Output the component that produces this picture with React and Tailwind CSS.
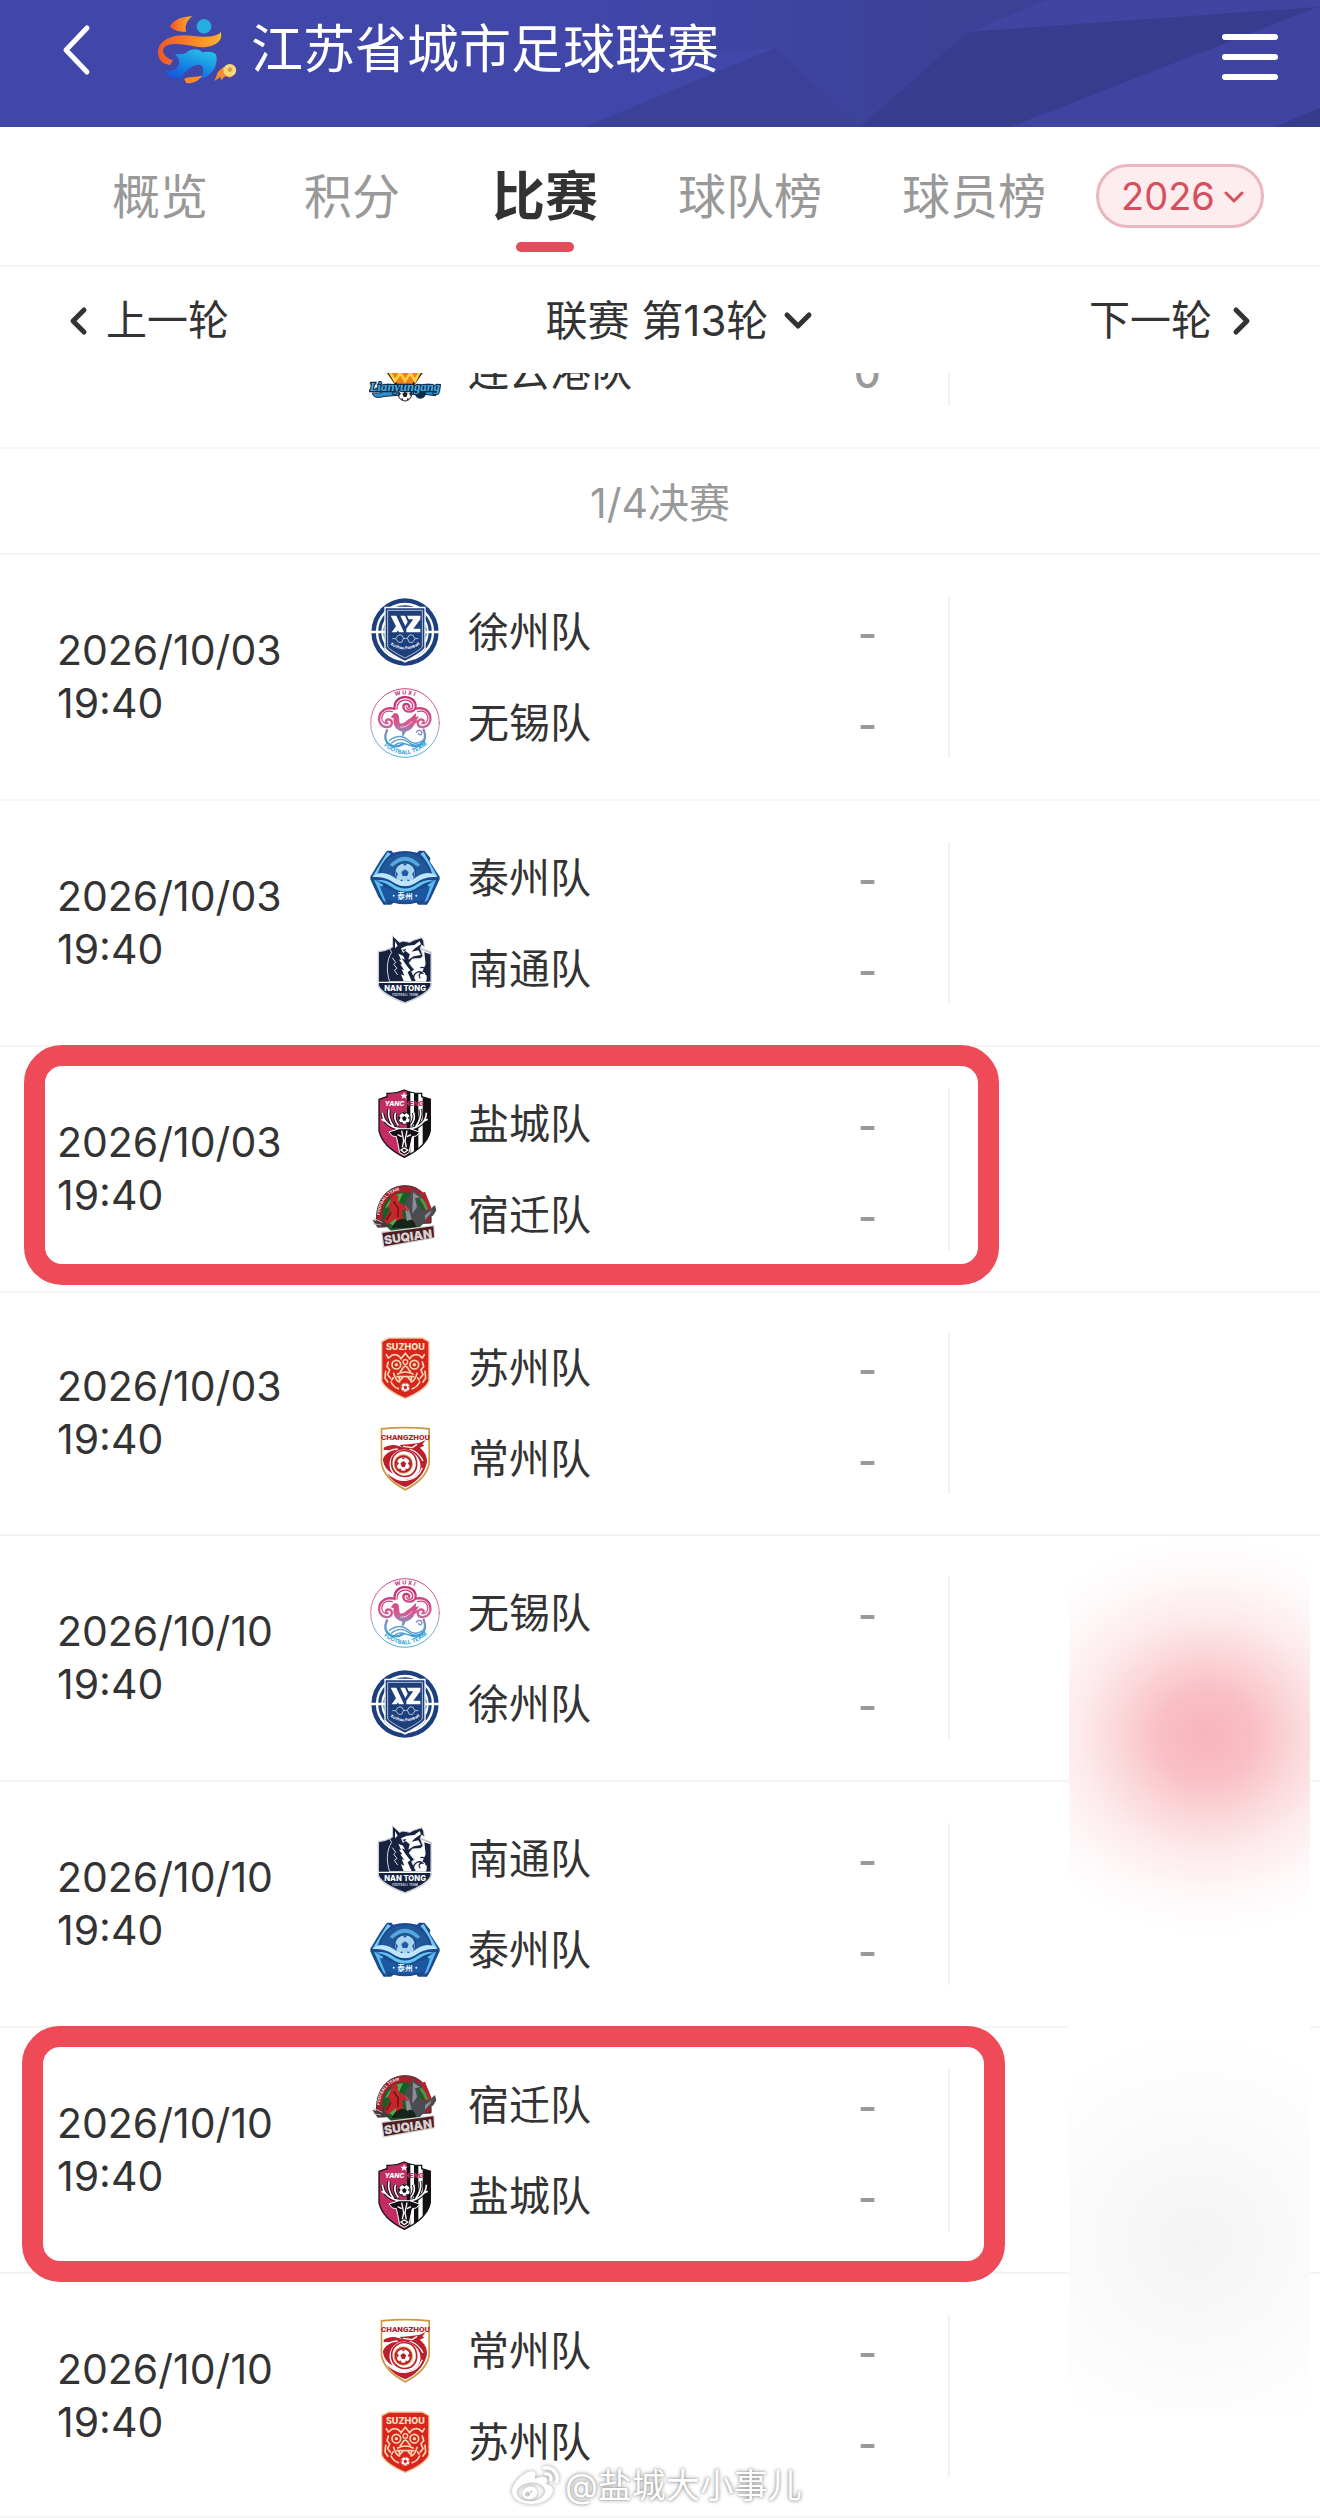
import React from 'react';
import { FaWeibo } from 'react-icons/fa';

const tabs = [
    { label: '概览', space: 'mr-24' },
    { label: '积分', space: 'mr-[92px]' },
    { label: '比赛', space: 'mr-20', active: true },
    { label: '球队榜', space: 'mr-20' },
    { label: '球员榜', space: 'mr-auto' },
];

const matches = [
    { date: '2026/10/03', time: '19:40', home: '徐州队', away: '无锡队' },
    { date: '2026/10/03', time: '19:40', home: '泰州队', away: '南通队' },
    { date: '2026/10/03', time: '19:40', home: '盐城队', away: '宿迁队', mark: 'left-6 right-[321px] -top-0.5 h-[240px]' },
    { date: '2026/10/03', time: '19:40', home: '苏州队', away: '常州队', pad: 'pt-[29px] pb-[30px]' },
    { date: '2026/10/10', time: '19:40', home: '无锡队', away: '徐州队' },
    { date: '2026/10/10', time: '19:40', home: '南通队', away: '泰州队' },
    { date: '2026/10/10', time: '19:40', home: '宿迁队', away: '盐城队', mark: 'left-[22px] right-[315px] -top-0.5 h-[256px]' },
    { date: '2026/10/10', time: '19:40', home: '常州队', away: '苏州队', pad: 'pt-[31px] pb-[29px] border-b-2' },
];

function Ball({ x, y, r, dark }) {
    return (
        <g transform={`translate(${x} ${y}) scale(${r / 10})`}>
            <circle r="10" fill="#fff" stroke={dark} strokeWidth="1.5" />
            <path d="M0-4 4-1 2 4H-2L-4-1Z" fill={dark} />
            <path d="M-3-9H3L0-6ZM9-4V3L6-1ZM-9-4V3L-6-1ZM7 7 3 9 3 6ZM-7 7-3 9-3 6Z" fill={dark} />
        </g>
    );
}

function Xuzhou() {
    return (
        <g>
            <circle r="101" fill="#1d3f7b" />
            <circle r="84" fill="none" stroke="#fff" strokeWidth="7" />
            <circle r="68" fill="none" stroke="#fff" strokeWidth="6" />
            <path d="M-102 0H102" stroke="#fff" strokeWidth="8" />
            <path d="M-62-76H62V50Q50 68 0 92Q-50 68-62 50Z" fill="#fff" />
            <path d="M-58-71H58V48Q46 63 0 86Q-46 63-58 48Z" fill="#1d3f7b" />
            <path d="M-52-65H52V45Q40 58 0 78Q-40 58-52 45Z" fill="none" stroke="#fff" strokeWidth="2" />
            <path d="M-43-49H-26L-3 1H-18ZM-40 1-27-17-20-5-26 1ZM-14-49H0L8-31 1-17ZM6-49H46V-38L25-10H46V1H4V-10L25-38H11Z" fill="#fff" />
            <path d="M-28 20-20 9H-10L-4 19-10 31H-20ZM-4 19H7L13 9H23L30 20 23 31H13L7 19M-28 20H-38M30 20H40" fill="none" stroke="#fff" strokeWidth="2" />
            <path id="xz-arc" d="M-48 35Q0 69 48 35" fill="none" />
            <text fill="#fff" fontSize="12" fontWeight="700" textAnchor="middle">
                <textPath href="#xz-arc" startOffset="50%">Xuzhou Football</textPath>
            </text>
        </g>
    );
}

function Wuxi() {
    return (
        <g>
            <defs>
                <linearGradient id="wx" x1="0" y1="-104" x2="0" y2="104" gradientUnits="userSpaceOnUse">
                    <stop offset="0" stopColor="#bb1f6b" />
                    <stop offset="0.5" stopColor="#d9588f" />
                    <stop offset="0.68" stopColor="#6a9dcb" />
                    <stop offset="1" stopColor="#1b9fd8" />
                </linearGradient>
            </defs>
            <g fill="none" stroke="url(#wx)" strokeLinecap="round">
                <circle r="103" fill="#fff" strokeWidth="2.5" />
                <g strokeWidth="7">
                    <path d="M-31-42C-37-88 32-88 32-50C32-28-5-30-5-48C-5-60 14-60 13-48" />
                    <path d="M-33-43C-82-54-92 7-57 12C-36 14-34-10-50-11C-59-11-59 0-52 1" />
                    <path d="M33-43C82-54 90 8 55 12C34 14 34-10 48-11C58-11 58 0 52 1" />
                    <path d="M-54 22C-72 62-34 80-6 63" />
                    <path d="M56 20C72 60 36 78 20 67" />
                </g>
                <g strokeWidth="4">
                    <path d="M-24-42C-26-76 23-76 23-51C23-38 6-38 5-48" />
                    <path d="M-38-34C-71-43-79-5-58 2" />
                    <path d="M38-34C70-43 77-5 58 2" />
                    <path d="M34 28C38 18 54 22 50 32C48 38 40 36 41 31" />
                    <path d="M-46 52C-20 32 0 42 12 53S42 62 60 47" />
                    <path d="M-40 60C-18 42 0 50 12 59S40 68 54 58M-30 66C-10 52 4 66 20 68" />
                </g>
            </g>
            <path d="M-43-17-34-28C-24-32-18-26-18-16L-16 0C-6 6 2-6 16-14C22-18 24-24 34-30L32-18 42-20 34-8 42-6 28 4C24 16 12 24 2 26L-4 38H-10L-8 26C-26 22-38 8-34-14Z" fill="url(#wx)" />
            <path d="M-14 12Q4 16 22-6" fill="none" stroke="#fff" strokeWidth="2" />
            <path id="wx-top" d="M-60-64Q0-108 60-64" fill="none" />
            <path id="wx-bottom" d="M-82 50Q0 140 84 46" fill="none" />
            <g fontSize="17" fontWeight="700" textAnchor="middle">
                <text fill="#b92c70">
                    <textPath href="#wx-top" startOffset="50%">W U X I</textPath>
                </text>
                <text fill="#2ca3d8">
                    <textPath href="#wx-bottom" startOffset="50%">FOOTBALL TEAM</textPath>
                </text>
            </g>
        </g>
    );
}

function Taizhou() {
    return (
        <g>
            <path d="M-54-82H-40L-36-76Q0-86 36-76L42-82H58L76-60 74-50 104-4V4L78 60 66 80H40L34 74Q0 84-34 74L-42 80H-64L-80 56-104 4V-4L-74-54Z" fill="#1c4a8e" />
            <path d="M-52-78-98-4-82-8C-78-34-60-58-42-72ZM56-78 98-4 82-8C78-34 60-58 46-72Z" fill="#6fcbf5" />
            <path d="M-94 4-66 66-56 74-70 36-66 20ZM94 4 68 66 58 74 72 36 68 20Z" fill="#59b9ec" />
            <path d="M-74-10C-70-38-50-62-30-70Q0-78 30-70C50-62 70-38 74-10L0 20Z" fill="#225799" />
            <path d="M-46-40Q0-88 46-40L37-34Q0-70-37-34Z" fill="#55a8dc" />
            <circle cy="-14" r="33" fill="#1c4a8e" />
            <circle cy="-14" r="30" fill="#a9d3ef" />
            <path d="M0-26 11-18 7-6H-7L-11-18ZM-8-44H8L0-36ZM-29-22-21-12-27 0ZM29-22 21-12 27 0ZM-18 10-8 4-6 15ZM18 10 8 4 6 15Z" fill="#1f5ca5" />
            <path d="M-98-2C-76-24-50-14-26 2Q0 18 26 2C50-14 76-24 98-2C68-6 46 6 28 17Q0 32-28 17C-46 6-68-6-98-2Z" fill="#bde6fb" />
            <path d="M-90 9C-60 0-44 14-26 25Q0 38 26 25C44 14 60 0 90 9C60 10 44 26 26 35Q0 46-26 35C-44 26-60 10-90 9Z" fill="#64c3f1" />
            <path d="M-94 4C-60 0-44 12-27 21Q0 34 27 21C44 12 60 0 94 4" fill="none" stroke="#1c4a8e" strokeWidth="3" />
            <path d="M-76 24Q-50 30-28 40Q0 50 28 40Q50 30 76 24L60 64Q0 82-60 64Z" fill="#1c57a1" />
            <text y="63" fill="#e6f6ff" fontSize="23" fontWeight="700" textAnchor="middle">泰州</text>
            <circle cx="-34" cy="53" r="3" fill="#e6f6ff" />
            <circle cx="34" cy="53" r="3" fill="#e6f6ff" />
        </g>
    );
}

function Nantong() {
    return (
        <g>
            <path d="M-82-54Q-58-56-42-66H40L80-52V50Q74 76 0 104Q-74 76-82 50Z" fill="#c9cdd8" />
            <path d="M-78-50Q-58-52-40-62H40L76-48V48Q70 72 0 99Q-70 72-78 48Z" fill="#17223f" />
            <path d="M-70-42Q-54-44-42-52L-50-10-34 36H-40L-50 30-70 34Z" fill="#17223f" />
            <path d="M40-62 76-48V38H14L0-20Z" fill="#fff" />
            <path d="M58-50 76-44V38H62C70 26 64 10 52 8L62-14Z" fill="#17223f" />
            <path
                d="M-46 38C-56 8-56-26-40-50L-46-60-37-66-38-100-16-80-6-84 14-80 26-86 50-94 56-84 58-66 50-72 46-62 54-40 48-32 22-30 12-18 28 2 20 8 34 38Z"
                fill="#17223f"
                stroke="#d3d6df"
                strokeWidth="3"
            />
            <path d="M-30-84-22-70-30-62ZM-12-62 6-70 28-72 44-84 48-74 30-62 20-52 40-56 48-42 26-38 10-28 14-44 2-54-6-48Z" fill="#fff" />
            <path d="M-8-58 4-60-2-52Z" fill="#17223f" />
            <path d="M-20-46-6-40 0-28-10-32 2-14 16 4 8 10 20 36H-4L-12 16-2 20-10 0-2 4-14-14-8-14-18-28-12-28Z" fill="#fff" />
            <path d="M-38-34-28-20-34-14-24-2-32 4-22 18" fill="none" stroke="#fff" strokeWidth="2.5" />
            <path d="M26 34C22 16 38 2 52 12C44 12 38 20 46 28M46-4C60-8 70 6 62 18" fill="none" stroke="#17223f" strokeWidth="4" />
            <path d="M-80 40H78" stroke="#fff" strokeWidth="4" />
            <path d="M-77 42H75V48Q70 72 0 98Q-70 72-77 48Z" fill="#17223f" />
            <text y="66" fill="#fff" fontSize="23" fontWeight="800" textAnchor="middle">NAN TONG</text>
            <text y="80" fill="#cfd5e2" fontSize="9" fontWeight="700" textAnchor="middle">FOOTBALL TEAM</text>
        </g>
    );
}

function Yancheng() {
    return (
        <g>
            <defs>
                <clipPath id="yc">
                    <path d="M-78-74-54-82V-92Q-28-90-2-102Q26-90 50-92V-82L76-74V20Q66 68-2 100Q-68 68-78 20Z" />
                </clipPath>
            </defs>
            <g clipPath="url(#yc)">
                <path d="M-80-104H6V104H-80Z" fill="#c22c62" />
                <path d="M6-104H80V104H6Z" fill="#111" />
                <path d="M16-104H27V104H16ZM40-104H53V104H40Z" fill="#fff" />
            </g>
            <path d="M-78-74-54-82V-92Q-28-90-2-102Q26-90 50-92V-82L76-74V20Q66 68-2 100Q-68 68-78 20Z" fill="none" stroke="#1b1118" strokeWidth="4" />
            <path d="M-3-96 0-88H8L2-83 4-75-3-80-10-75-8-83-14-88H-6Z" fill="#fff" />
            <text y="-53" x="-61" fill="#fff" fontSize="20" fontStyle="italic" fontWeight="800">YANC</text>
            <text y="-53" x="-2" fill="#c22c62" fontSize="20" fontStyle="italic" fontWeight="800">HENG</text>
            <g fill="none" strokeLinejoin="round">
                <g stroke="#161016" strokeWidth="11">
                    <path d="M-16 14C-40 12-66-4-68-34M-34 8C-46-8-52-24-48-44M-20 4C-32-10-32-24-28-34" />
                    <path d="M14 14C38 12 64-4 64-34M32 8C44-8 50-24 46-44M18 4C28-10 30-24 26-34" />
                </g>
                <g stroke="#fff" strokeWidth="5">
                    <path d="M-16 14C-40 12-66-4-68-34M-34 8C-46-8-52-24-48-44M-20 4C-32-10-32-24-28-34M-60-8-70-14" />
                    <path d="M14 14C38 12 64-4 64-34M32 8C44-8 50-24 46-44M18 4C28-10 30-24 26-34M56-8 68-14" />
                </g>
            </g>
            <Ball x={-2} y={-17} r={18} dark="#161016" />
            <path d="M-18 14H14L44 24 34 36 22 38 18 56 12 86-2 94-16 86-22 56-26 38-38 36-48 24Z" fill="#161016" stroke="#fff" strokeWidth="3" />
            <path d="M-10 20-4 50-8 70M6 20 0 50 4 70M-22 32-10 38M18 32 6 38M-12 78-2 72 8 78-2 86Z" fill="none" stroke="#fff" strokeWidth="4" />
        </g>
    );
}

function Suqian() {
    return (
        <g>
            <path d="M-84 30C-94-40-54-88 0-88C48-88 82-50 78 24Z" fill="#a3202c" stroke="#3d2a2a" strokeWidth="3" />
            <circle cx="-4" cy="-4" r="64" fill="#1b5f28" />
            <path d="M-60-20Q-40-64-6-66L-18-40ZM-52 20-20 0-30 36Z" fill="#57a852" />
            <path id="sq-arc" d="M-76 0C-72-50-40-76 4-77" fill="none" />
            <text fill="#f6e3e3" fontSize="12" fontWeight="700">
                <textPath href="#sq-arc">FOOTBALL TEAM</textPath>
            </text>
            <path d="M36-62 60-70 72-40 80-20 62-14Z" fill="#b9232f" />
            <path d="M42-58 58-34 66-16" stroke="#3aa04a" strokeWidth="8" fill="none" />
            <path d="M20-82 36-66 52-60 50-50 34-48 44-24 60-10 72-14 90-30 94-14 84 2 70 6 60 24 44 34H-4L8 2-4-20 6-50 20-62Z" fill="#4a4c52" />
            <path d="M24-68 38-58 46-54 30-50 36-24 22-4ZM0-30 12-16 22 20 6 30ZM60 0 80-14 76-4 60 14Z" fill="#8b8e95" />
            <path d="M-40-56-28-64-20-54-22-42 0-28 12-12-8-16-6 10-22 34-28 10-42 22-68 38-60 12-44-14-52-24-44-40Z" fill="#c4262e" />
            <path d="M-34-40-20-20-22 6M-42-8-56 16" fill="none" stroke="#65110f" strokeWidth="4" />
            <path d="M-98 14-76 20-58 0-62 18-44 36-82 38Z" fill="#4a3b3a" />
            <path d="M-94 10-68 22M-96 26-72 30" stroke="#b7b0b0" strokeWidth="3" />
            <path d="M-40 40C-28 8-2 8 8 18C20 8 30 20 34 38Z" fill="#16241a" />
            <path d="M-72 50 88 30 90 70-66 98Z" fill="#d9d2d2" />
            <path d="M-68 54 85 34 87 67-62 94Z" fill="#4c1e22" />
            <text transform="rotate(-8)" x="0" y="79" fill="#d8d3d3" fontSize="36" fontWeight="900" textAnchor="middle">SUQIAN</text>
        </g>
    );
}

function Suzhou() {
    return (
        <g>
            <path d="M-72-80-50-92H54L74-80V40Q64 68 1 94Q-62 68-72 40Z" fill="#f3cfa6" />
            <path d="M-68-78-48-88H52L70-78V38Q60 64 1 89Q-58 64-68 38Z" fill="#d8261c" />
            <text x="1" y="-54" fill="#fbe3c4" fontSize="27" fontWeight="800" textAnchor="middle">SUZHOU</text>
            <g fill="none" stroke="#f9d9b4" strokeWidth="5" strokeLinecap="round">
                <circle cx="-26" cy="-10" r="13" />
                <circle cx="28" cy="-10" r="13" />
                <circle cx="1" cy="-18" r="7" strokeWidth="4" />
                <path d="M-46-32C-36-46-18-40-12-28L1-44 14-28C20-40 38-46 50-32" />
                <path d="M-50-18-54-4-46 6-52 20-44 30M52-18 56-4 48 6 54 20 46 30" />
                <path d="M-14 10C-6 4-8-4 1-6C10-4 8 4 16 10M-22 18Q1 6 24 18" />
                <path d="M-34 16C-30 34-20 42-16 42M36 16C32 34 22 42 18 42" />
                <path d="M-24 26H26M-18 26-16 38-8 30M20 26 18 38 10 30" />
                <path d="M-42 42Q-34 58-20 62M44 42Q36 58 22 62" />
                <path d="M-56-40-50-30M58-40 52-30M-58 10-60 30-52 42M60 10 62 30 54 42M-36 30-40 36M38 30 42 36" />
            </g>
            <circle cx="-26" cy="-10" r="5" fill="#f9d9b4" />
            <circle cx="28" cy="-10" r="5" fill="#f9d9b4" />
            <Ball x={1} y={58} r={14} dark="#d8261c" />
        </g>
    );
}

function Changzhou() {
    return (
        <g>
            <path d="M-73-93Q1-100 75-93V14Q66 62 1 95Q-64 62-73 14Z" fill="#c99b45" />
            <path d="M-68-88Q1-95 70-88V13Q62 58 1 89Q-60 58-68 13Z" fill="#fff" />
            <text x="1" y="-57" fill="#b5202b" fontFamily="Roboto" fontSize="24" fontWeight="900" textAnchor="middle">CHANGZHOU</text>
            <path d="M-64-34C-44-46-24-44-8-34L-16-42 10-44 42-48 62-56 52-44 58-40 44-34C60-22 66-8 66 8C60 50 20 78 1 84C-24 76-44 60-54 42C-40 58-16 66 4 62C44 58 58 20 36-8C20-28-8-34-26-22C-50-8-52 26-36 44C-58 34-66 14-66 0C-62-12-52-20-42-24C-52-28-58-28-64-26Z" fill="#bb1f2b" />
            <g fill="none" stroke="#fff">
                <path d="M-40 48C-20 72 34 72 52 26" strokeWidth="4" />
                <path d="M-66-10C-54-22-36-30-22-30" strokeWidth="4" />
                <path d="M-6-38 22-34 36-44M14-30C30-24 46-12 54 6" strokeWidth="4" />
            </g>
            <path d="M-40 16C-42-14-16-30 8-24C40-16 44 30 18 48C-6 60-38 46-40 16Z" fill="none" stroke="#bb1f2b" strokeWidth="5" />
            <circle cx="-5" cy="15" r="29" fill="#d9a653" />
            <circle cx="-5" cy="15" r="26" fill="#bb1f2b" />
            <Ball x={-5} y={15} r={22} dark="#bb1f2b" />
        </g>
    );
}

function Lianyungang() {
    return (
        <g>
            <path d="M-86-40H84L0 84Z" fill="#2b1a12" />
            <path d="M-72-40H68L0 76Z" fill="#ee7f1a" />
            <path d="M-48 0-30 30-14 6 0 30 16 6 30 30 46 0M-18 0V14M18 0V14" fill="none" stroke="#ffcf3c" strokeWidth="8" />
            <path d="M-98 66Q-80 70-60 60L70 54Q96 64 98 44L92 74Q70 72 50 68L-60 76Q-96 86-98 66Z" fill="#2f8fce" stroke="#0e2c48" strokeWidth="3" />
            <circle cx="46" cy="66" r="17" fill="#0e2c48" />
            <Ball x={0} y={70} r={20} dark="#222" />
            <text y="60" fill="#49aee4" stroke="#0e2c48" strokeWidth="7" paintOrder="stroke" fontFamily="Liberation Serif" fontSize="38" fontStyle="italic" fontWeight="700" textAnchor="middle">Lianyungang</text>
        </g>
    );
}

const crests = {
    徐州队: Xuzhou,
    无锡队: Wuxi,
    泰州队: Taizhou,
    南通队: Nantong,
    盐城队: Yancheng,
    宿迁队: Suqian,
    苏州队: Suzhou,
    常州队: Changzhou,
    连云港队: Lianyungang,
};

function LeagueLogo() {
    return (
        <svg viewBox="45 40 250 215" className="h-[72px] w-[84px] shrink-0" aria-hidden="true">
            <defs>
                <linearGradient id="lg-orange" x1="0" x2="1">
                    <stop offset="0" stopColor="#f0562b" />
                    <stop offset="0.5" stopColor="#f9812a" />
                    <stop offset="1" stopColor="#fdb52b" />
                </linearGradient>
                <linearGradient id="lg-blue" x1="0" y1="1" x2="0.6" y2="0">
                    <stop offset="0" stopColor="#1648d8" />
                    <stop offset="0.5" stopColor="#1382e6" />
                    <stop offset="1" stopColor="#28b9e6" />
                </linearGradient>
            </defs>
            <path d="M156 47C120 48 98 60 89 78C102 90 122 94 138 93C132 78 140 58 156 47Z" fill="url(#lg-orange)" />
            <circle cx="191" cy="77" r="22" fill="#25addf" />
            <path d="M240 92C238 108 190 110 160 106C110 98 62 110 54 146C50 172 66 192 90 192L98 178C78 172 64 156 70 142C84 122 130 130 170 138C210 144 254 124 240 92Z" fill="url(#lg-orange)" />
            <path d="M104 160C118 160 132 162 142 152C158 142 176 144 186 154C202 152 222 150 228 164C232 190 220 214 200 226C190 232 186 236 182 234C190 216 192 200 182 192C160 188 140 206 124 226C108 242 82 232 74 208C90 214 112 208 116 190C120 176 112 168 104 160Z" fill="url(#lg-blue)" />
            <path d="M132 234C146 226 168 230 186 224C176 240 156 250 138 246Z" fill="#fa8a2c" />
            <path d="M248 198 232 214 222 240 240 228 242 238 254 226 270 230 280 216Z" fill="#f18a35" />
            <circle cx="268" cy="208" r="19" fill="#f8d778" />
            <path d="M262 202 270 198 276 206 270 214 262 210Z" fill="#d99b45" />
        </svg>
    );
}

function Chevron({ d, box, className }) {
    return (
        <svg viewBox={box} className={className} fill="none" stroke="currentColor" strokeLinecap="round" strokeLinejoin="round" aria-hidden="true">
            <path d={d} />
        </svg>
    );
}

function Header() {
    return (
        <header className="relative flex h-[127px] items-start bg-[#4047a9] text-white">
            <svg viewBox="0 0 1320 127" preserveAspectRatio="none" className="absolute inset-0 h-full w-full" aria-hidden="true">
                <defs>
                    <linearGradient id="hd" x1="0.3" x2="0.65">
                        <stop offset="0" stopColor="#4047a9" />
                        <stop offset="1" stopColor="#3b4196" />
                    </linearGradient>
                </defs>
                <path d="M300 50 440 0H1320V127H585L775 48 700 54Z" fill="url(#hd)" />
                <path d="M585 127 775 48 860 127Z" fill="#3b4198" />
                <path d="M968 32 1048 0H1320V7Z" fill="#3f45a0" />
                <path d="M968 32 1318 7 1010 127H860Z" fill="#373d8e" />
                <path d="M1010 127 1318 7H1320V127Z" fill="#3e44a0" />
                <path d="M1275 127 1320 108V127Z" fill="#363c8c" />
            </svg>
            <button type="button" aria-label="返回" className="relative ml-[60px] mt-[22px]">
                <Chevron box="0 0 32 56" d="M27 6 6 28 27 50" className="h-14 w-8 stroke-5" />
            </button>
            <div className="relative ml-[63px] mt-3 flex items-center gap-3">
                <LeagueLogo />
                <h1 className="text-[52px] leading-[76px]">江苏省城市足球联赛</h1>
            </div>
            <button type="button" aria-label="菜单" className="relative ml-auto mr-[42px] mt-[34px] flex flex-col gap-3.5">
                <span className="h-1.5 w-14 rounded-full bg-white" />
                <span className="h-1.5 w-14 rounded-full bg-white" />
                <span className="h-1.5 w-14 rounded-full bg-white" />
            </button>
        </header>
    );
}

function Tabs() {
    return (
        <nav className="flex h-[140px] items-start border-b-2 border-[#f5f5f5] pl-[112px] pr-14 pt-[37px]">
            {tabs.map((tab) => (
                <a
                    key={tab.label}
                    href="#"
                    aria-current={tab.active ? 'page' : undefined}
                    className={`leading-[66px] ${tab.space} ${
                        tab.active ? 'flex flex-col items-center text-[53px] font-bold text-[#333]' : 'text-[48px] text-[#999]'
                    }`}
                >
                    {tab.label}
                    {tab.active && <span className="mt-3 h-2.5 w-[58px] rounded-full bg-[#e44c5e]" />}
                </a>
            ))}
            <div className="relative text-[#d5505e]">
                <select
                    aria-label="赛季"
                    className="h-16 w-[168px] appearance-none rounded-full border-[3px] border-[#ebb7bf] bg-[#fdedef] pl-[22px] text-[38px] leading-none"
                >
                    <option>2026</option>
                </select>
                <Chevron box="0 0 20 14" d="M2 3 10 11 18 3" className="pointer-events-none absolute right-5 top-[26px] h-3.5 w-5 stroke-3" />
            </div>
        </nav>
    );
}

function RoundBar() {
    return (
        <div className="flex h-[106px] items-center justify-between px-[68px] pt-0.5 text-[41px] text-[#333]">
            <button type="button" className="flex items-center gap-[18px]">
                <Chevron box="0 0 20 30" d="M16 4 5 15 16 26" className="h-[30px] w-5 stroke-5" />
                上一轮
            </button>
            <div className="relative ml-10">
                <select aria-label="轮次" className="appearance-none pr-11 text-[42px]">
                    <option>联赛 第13轮</option>
                </select>
                <Chevron box="0 0 30 20" d="M4 4 15 15 26 4" className="pointer-events-none absolute right-0 top-[22px] h-5 w-[30px] stroke-5" />
            </div>
            <button type="button" className="flex items-center gap-5">
                下一轮
                <Chevron box="0 0 20 30" d="M4 4 15 15 4 26" className="h-[30px] w-5 stroke-5" />
            </button>
        </div>
    );
}

function Team({ name, score = '-' }) {
    const Crest = crests[name];
    return (
        <div className="flex h-[91px] items-center">
            <svg viewBox="-108 -108 216 216" className="mr-[27px] h-[72px] w-[72px] shrink-0" aria-hidden="true">
                <Crest />
            </svg>
            <span className="flex-1 text-[41px] leading-[60px] text-[#333]">{name}</span>
            <span className="w-[60px] pt-1 text-center text-[42px] font-medium leading-[60px] text-[#999]">{score}</span>
        </div>
    );
}

function MatchRow({ date, time, home, away, score, mark, pad = 'py-[31px]' }) {
    return (
        <li className={`relative flex w-full items-center border-t-2 border-[#f5f5f5] ${pad}`}>
            <div className="flex w-[72%] items-center pl-[57px]">
                <div className="w-[312px] text-[41px] leading-[53px] text-[#333]">
                    {date}
                    <br />
                    {time}
                </div>
                <div className="flex-1 pr-[51px]">
                    {home ? <Team name={home} score={score} /> : <div className="h-[91px]" />}
                    <Team name={away} score={score} />
                </div>
                <div className="h-[162px] w-0.5 bg-[#f1f1f1]" />
            </div>
            {mark && <div className={`absolute z-10 rounded-[38px] border-[21px] border-[#ee4a58] ${mark}`} />}
        </li>
    );
}

export default function App() {
    return (
        <div className="overflow-hidden bg-white font-['Inter','Noto_Sans_CJK_SC',sans-serif]">
            <Header />
            <Tabs />
            <RoundBar />
            <main className="relative">
                {/* previous match, scrolled under the round bar */}
                <ul className="flex h-[74px] items-end overflow-hidden">
                    <MatchRow away="连云港队" score="0" />
                </ul>
                <h2 className="h-[106px] border-t-2 border-[#f5f5f5] text-center text-[41px] leading-[108px] text-[#999]">1/4决赛</h2>
                <ul className="relative">
                    {matches.map((match, index) => (
                        <MatchRow key={index} {...match} />
                    ))}
                    <div className="absolute right-[10px] top-[983px] h-[460px] w-[241px] bg-[radial-gradient(ellipse_215px_200px_at_138px_199px,#f8b4bb,#f9bfc5_22%,#fbd8db_42%,#fdebed_60%,#fef7f8_78%,#fff)]" />
                    <div className="absolute right-[10px] top-[1443px] h-[420px] w-[241px] bg-[radial-gradient(circle_210px_at_126px_245px,#f5f4f5,#f9f8f9_35%,#fdfcfd_70%,#fff)]" />
                </ul>
                <div className="absolute bottom-2 left-[512px] z-20 flex items-center gap-1.5 text-[34px] leading-[48px] text-white [text-shadow:0_0_4px_#888,0_0_2px_#aaa]">
                    <FaWeibo size={47} className="drop-shadow-[0_0_2px_#999]" />
                    @盐城大小事儿
                </div>
            </main>
        </div>
    );
}
